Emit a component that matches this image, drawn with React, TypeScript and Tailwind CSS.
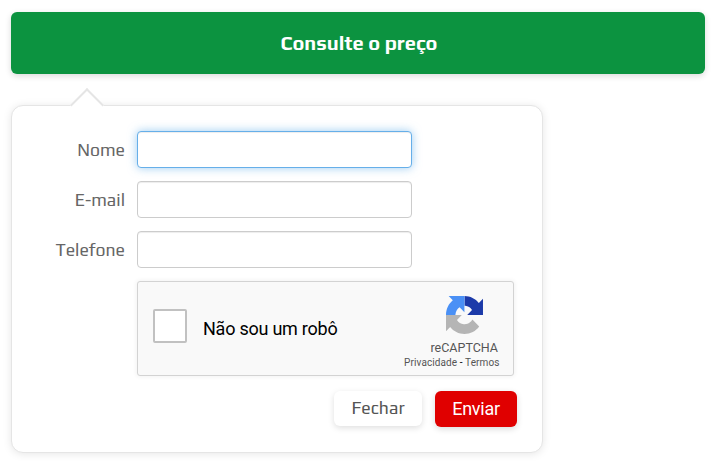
import React from 'react';

const fields = [
  { id: 'nome', label: 'Nome', type: 'text', focused: true },
  { id: 'email', label: 'E-mail', type: 'email', focused: false },
  { id: 'telefone', label: 'Telefone', type: 'tel', focused: false },
];

const RecaptchaLogo = () => (
  <svg className="w-[37px] h-[38px]" viewBox="0 0 64 64" preserveAspectRatio="none" aria-hidden="true">
    <path
      fill="#1c3aa9"
      d="M64 31.955l-.033-1.37V4.687l-7.16 7.16C50.948 4.674 42.033.093 32.05.093v16.26c.485 0 .86.057 1.135.163 4.976.393 9.288 3.14 11.828 7.124l-8.307 8.307L64 31.953"
    />
    <path
      fill="#4a90f5"
      d="M31.862.094l-1.37.033H4.594l7.16 7.16C4.58 13.147 0 22.06 0 32.046h16.26c0-.485.057-.86.163-1.135.393-4.976 3.14-9.288 7.124-11.828l8.307 8.307L31.862.094"
    />
    <path
      fill="#b5b5b5"
      d="M.001 32.045l.033 1.37v25.898l7.16-7.16c5.86 7.173 14.774 11.754 24.76 11.754 10.4 0 19.622-4.96 25.458-12.64l-11.736-11.86a15.55 15.55 0 0 1-4.754 5.334c-2.05 1.6-4.952 2.906-8.968 2.906-.485 0-.86-.057-1.135-.163-4.976-.393-9.288-3.14-11.828-7.124l8.307-8.307c-10.522.04-22.4.066-27.295-.005"
    />
  </svg>
);

const Recaptcha = () => (
  <div className="ml-[125px] mt-[13px] w-[377px] h-[95px] flex justify-between rounded-[3px] border border-[#d3d3d3] bg-[#f9f9f9] shadow-[0_0_4px_1px_rgba(0,0,0,0.05)] font-['Roboto',sans-serif]">
    <div className="flex items-center pl-[15px]">
      <div className="w-[34px] h-[34px] mb-[5px] rounded-[2px] border-2 border-[#c1c1c1] bg-white"></div>
      <span className="ml-[16px] text-[18px] leading-6 tracking-[-0.24px] text-black whitespace-nowrap">Não sou um robô</span>
    </div>
    <div className="flex flex-col items-end pr-[14px] pt-[14px] text-[#555]">
      <div className="mr-[16px]"><RecaptchaLogo /></div>
      <span className="mt-[6px] mr-px text-[12.5px] leading-[16px]">reCAPTCHA</span>
      <div className="-mr-[0.5px] text-[10px] leading-[14px] tracking-[0.1px] whitespace-nowrap">
        <a href="#">Privacidade</a>
        <span className="text-black"> - </span>
        <a href="#">Termos</a>
      </div>
    </div>
  </div>
);

const App = () => {
  return (
    <main className="w-[727px] h-[461px] bg-white pl-[11px] pt-[12px] overflow-hidden font-['Play','Noto_Sans',sans-serif]">
      <button className="block w-[694px] h-[62px] pl-[2px] rounded-[6px] bg-[#0c9340] text-white text-[20px] font-bold shadow-[0_2px_6px_rgba(0,0,0,0.15)]">
        Consulte o preço
      </button>

      <form className="relative mt-[31px] w-[532px] h-[348px] rounded-[12px] border border-[#e5e5e5] bg-white pt-[25px] shadow-[0_1px_8px_rgba(0,0,0,0.1)]">
        {/* arrow pointing back at the button */}
        <div className="absolute left-[63px] top-[-13px] w-6 h-6 rotate-45 border-l-2 border-t-2 border-[#e5e5e5] bg-white"></div>
        <div className="relative flex flex-col gap-[13px]">
          {fields.map((field) => (
            <div key={field.id} className="flex items-center">
              <label htmlFor={field.id} className="w-[113px] mr-[12px] text-right text-[17.6px] leading-6 text-[#666]">
                {field.label}
              </label>
              <input
                id={field.id}
                type={field.type}
                className={`w-[275px] h-[37px] px-3 rounded-[4px] border bg-white outline-none ${
                  field.focused
                    ? 'border-[#66afe9] shadow-[inset_0_1px_1px_rgba(0,0,0,0.075),0_0_10px_rgba(102,175,233,0.65)]'
                    : 'border-[#ccc] shadow-[inset_0_1px_1px_rgba(0,0,0,0.075)]'
                }`}
              />
            </div>
          ))}
        </div>

        <Recaptcha />

        <div className="mt-[15px] pr-[25px] flex justify-end items-start gap-[13px]">
          <button type="button" className="w-[88px] h-[35px] pb-[2px] rounded-[6px] bg-white text-[17.6px] leading-6 text-[#555] shadow-[0_2px_6px_rgba(0,0,0,0.13)]">
            Fechar
          </button>
          <button type="submit" className="w-[82px] h-[36px] rounded-[6px] bg-[#e00000] text-[18px] leading-6 tracking-[-0.25px] text-white font-['Roboto',sans-serif] shadow-[0_2px_6px_rgba(0,0,0,0.15)]">
            Enviar
          </button>
        </div>
      </form>
    </main>
  );
};

export default App;
